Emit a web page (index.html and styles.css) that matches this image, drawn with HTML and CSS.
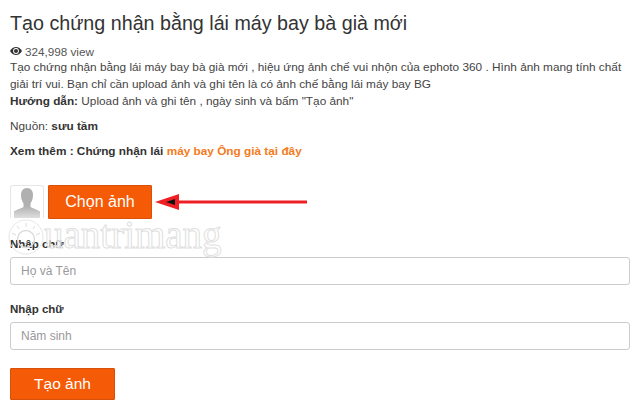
FILE: index.html
```html
<!DOCTYPE html>
<html lang="vi">
<head>
<meta charset="utf-8">
<title>Tạo chứng nhận bằng lái máy bay bà già mới</title>
<link rel="stylesheet" href="styles.css">
</head>
<body>
<main class="page">
  <h1 class="title">Tạo chứng nhận bằng lái máy bay bà già mới</h1>
  <div class="views">
    <svg class="eye" viewBox="0 0 12 8" width="12" height="8"><path d="M0 4C1.5 1.5 3.5 0 6 0s4.500 1.500 6 4C10.500 6.500 8.500 8 6 8S1.500 6.500 0 4z" fill="#333"/><circle cx="6" cy="4" r="2.900" fill="#fff"/><circle cx="6" cy="4" r="2" fill="#333"/></svg>
    <span>324,998 view</span>
  </div>
  <p class="desc">Tạo chứng nhận bằng lái máy bay bà già mới , hiệu ứng ảnh chế vui nhộn của ephoto 360 . Hình ảnh mang tính chất giải trí vui. Bạn chỉ cần upload ảnh và ghi tên là có ảnh chế bằng lái máy bay BG<br><b class="strong">Hướng dẫn:</b> Upload ảnh và ghi tên , ngày sinh và bấm "Tạo ảnh"</p>
  <p class="source">Nguồn: <b class="strong">sưu tầm</b></p>
  <p class="more"><b class="strong">Xem thêm : Chứng nhận lái <span class="link">máy bay Ông già tại đây</span></b></p>

  <div class="picker">
    <div class="avatar">
      <svg viewBox="0 0 32 32" width="32" height="32"><defs><linearGradient id="fade" x1="0" y1="0" x2="0" y2="1"><stop offset=".6" stop-color="#b0b0b0"/><stop offset="1" stop-color="#dedede"/></linearGradient></defs><path d="M16 2c4 0 6 3 6 7 0 3.500-1 6-2.500 8.500v3.500c2 1.500 7 2.500 9.500 4.500V32H3v-6.500c2.500-2 7.500-3 9.500-4.500v-3.500C11 15 10 12.500 10 9c0-4 2-7 6-7z" fill="url(#fade)"/></svg>
    </div>
    <button class="btn btn-pick" type="button">Chọn ảnh</button>
    <svg class="arrow" viewBox="0 0 154 20" width="154" height="20"><path d="M153 8.500v3H25V18L1 10l24-8v6.500z" fill="#ee2024"/><path d="M12 10l9-3v6z" fill="#111"/></svg>
  </div>

  <label class="field">
    <span class="label">Nhập chữ</span>
    <input class="input" placeholder="Họ và Tên">
  </label>
  <label class="field field-second">
    <span class="label">Nhập chữ</span>
    <input class="input" placeholder="Năm sinh">
  </label>
  <button class="btn btn-make" type="button">Tạo ảnh</button>
</main>

<div class="watermark">
  <svg class="sun" viewBox="0 0 36 38" width="36" height="38">
    <circle cx="18" cy="19" r="17" fill="none" stroke="#e6e6e6" stroke-width="1"/>
    <circle cx="18" cy="21" r="8.500" fill="none" stroke="#dcdcdc" stroke-width="1.500"/>
    <path d="M18 5v4M9 8l2 3M27 8l-2 3M4 15l4 2M32 15l-4 2" stroke="#dcdcdc" stroke-width="1" fill="none"/>
  </svg>
  <span class="wm-text">uantrimang</span>
</div>
</body>
</html>
```
FILE: styles.css
```css
* { box-sizing: border-box; }
html, body { margin: 0; padding: 0; background: #fff; }
body {
  position: relative;
  width: 640px;
  height: 411px;
  overflow: hidden;
  font-family: "Liberation Sans", Arial, sans-serif;
  font-size: 11.8px;
  line-height: 17px;
  color: #444;
}
.page { padding: 11px 10px 0; }
.title {
  margin: 0;
  font-size: 19.7px;
  line-height: 24px;
  font-weight: 400;
  color: #333;
}
.views {
  display: flex;
  align-items: center;
  gap: 3px;
  margin-top: 8px;
  height: 16px;
  font-size: 11.7px;
  color: #555;
}
.desc { margin: 0; }
.source { margin: 8px 0 0; }
.more { margin: 8px 0 0; }
.strong { font-weight: 700; color: #333; }
.link { color: #f47b20; }
.picker {
  display: flex;
  align-items: flex-start;
  margin-top: 25px;
}
.avatar {
  width: 34px;
  height: 33px;
  border: 1px solid #e6e6e6;
  border-bottom: 0;
  border-radius: 3px 3px 0 0;
  overflow: hidden;
  margin-right: 4px;
}
.avatar svg { display: block; }
.btn {
  display: block;
  border: 1px solid #d9500a;
  border-radius: 1px;
  background: #f55a06;
  color: #fff;
  font-family: "Liberation Sans", Arial, sans-serif;
  font-size: 16px;
  padding: 0;
}
.btn-pick { width: 104px; height: 34px; }
.arrow { margin: 7px 0 0 2px; }
.field { display: block; }
.label {
  display: block;
  font-size: 11.5px;
  font-weight: 700;
  line-height: 17px;
  color: #333;
}
.field { margin-top: 17px; }
.field-second { margin-top: 16px; }
.input {
  display: block;
  width: 620px;
  height: 28px;
  margin-top: 4px;
  padding: 0 10px;
  border: 1px solid #ccc;
  border-radius: 3px;
  background: #fff;
  font-family: "Liberation Sans", Arial, sans-serif;
  font-size: 12px;
}
.input::placeholder { color: #999; opacity: 1; }
.btn-make { width: 105px; height: 32px; margin-top: 18px; font-size: 15.5px; }
.watermark {
  position: absolute;
  left: 8px;
  top: 218px;
  display: flex;
  align-items: flex-start;
  pointer-events: none;
}
.wm-text {
  margin: -2px 0 0 0;
  font-family: "Liberation Serif", serif;
  font-size: 39px;
  line-height: 38px;
  color: rgba(255,255,255,.6);
  -webkit-text-stroke: 1px #e0e0e0;
}
```
